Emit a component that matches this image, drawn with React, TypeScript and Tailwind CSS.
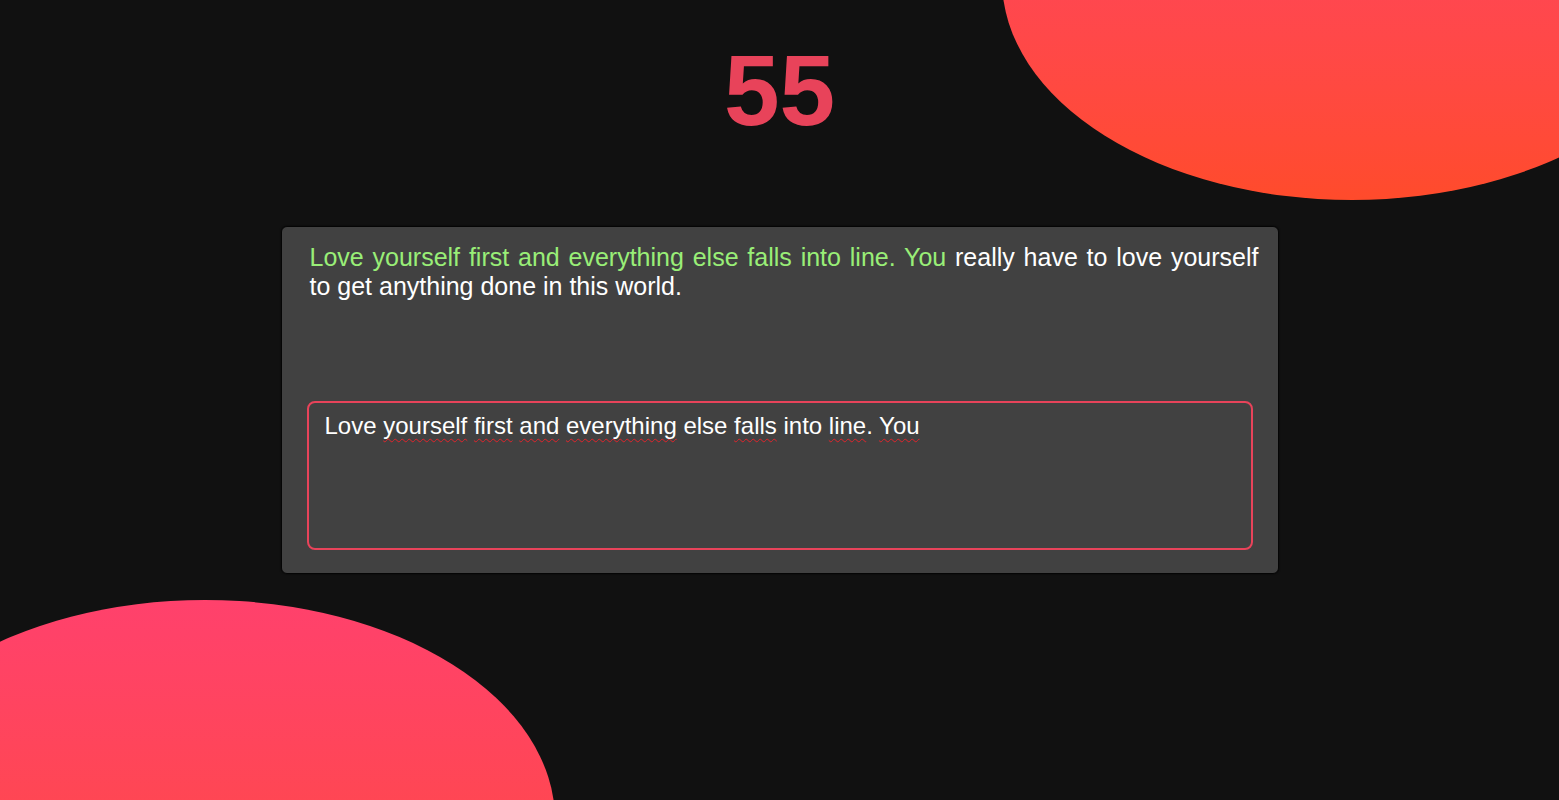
import React from "react";

const font = { fontFamily: '"Liberation Sans", Arial, sans-serif' };

function Sq({ children }: { children: React.ReactNode }) {
  return (
    <span className="underline decoration-wavy decoration-[#e0242b] decoration-1 underline-offset-[4px] [text-decoration-skip-ink:none]">
      {children}
    </span>
  );
}

export default function App() {
  return (
    <div
      className="relative w-full h-[800px] overflow-hidden bg-[#111111]"
      style={font}
    >
      <div className="absolute left-[1002px] top-[-240px] w-[700px] h-[440px] rounded-[50%] bg-gradient-to-b from-[#ff416c] to-[#ff4b2b]" />
      <div className="absolute left-[-145px] top-[600px] w-[700px] h-[440px] rounded-[50%] bg-gradient-to-b from-[#ff416c] to-[#ff4b2b]" />

      <div className="relative z-10 flex flex-col items-center pt-[40px]">
        <h1 className="text-[100px] leading-none font-bold text-[#e8435a] h-[100px]">
          55
        </h1>

        <div className="mt-[86px] w-[998px] h-[348px] rounded-md border border-[#050505] bg-[#414141] pt-[16px] pl-[25px] shadow-[0_0_2px_rgba(0,0,0,0.8)]">
          <p className="ml-[3px] w-[949px] text-[25px] leading-[29px] text-white">
            <span className="block whitespace-nowrap text-justify [text-align-last:justify]">
              <span className="text-[#99ee77]">
                Love yourself first and everything else falls into line. You
              </span>{" "}
              really have to love yourself
            </span>
            <span className="block">to get anything done in this world.</span>
          </p>
          <div className="mt-[100px] w-[946px] h-[149px] rounded-lg border-2 border-[#e8435a] pl-[16px] pr-[15px] pt-[8px] text-[24px] leading-[29px] text-white">
            Love <Sq>yourself</Sq> <Sq>first</Sq> <Sq>and</Sq>{" "}
            <Sq>everything</Sq> else <Sq>falls</Sq> into <Sq>line</Sq>.{" "}
            <Sq>You</Sq>
          </div>
        </div>
      </div>
    </div>
  );
}
